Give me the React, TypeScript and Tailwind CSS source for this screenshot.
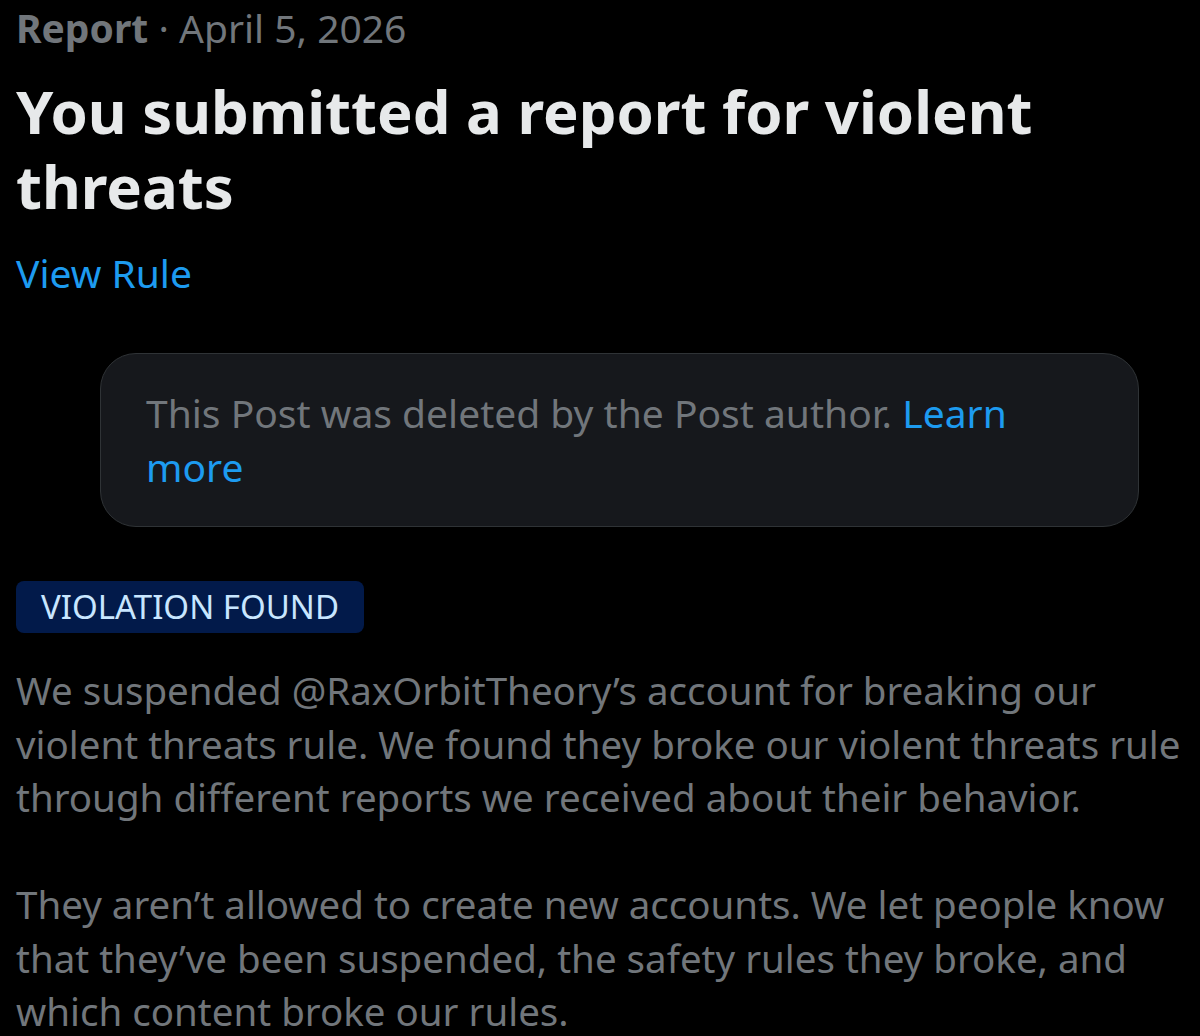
export default function App() {
  return (
    <div className="min-h-[1036px] w-[1200px] overflow-hidden bg-black pl-4 pr-[8px] font-['Noto_Sans',sans-serif]">
      <div className="flex flex-col">
        <p className="mt-[4px] text-[39px] leading-[48px] text-[#71767b]">
          <span className="font-bold">Report</span> · April 5, 2026
        </p>
        <h1 className="mt-[22px] text-[59.8px] font-bold leading-[75px] text-[#e7e9ea]">
          You submitted a report for violent threats
        </h1>
        <a className="mt-[25px] text-[39px] leading-[48px] text-[#1d9bf0]">View Rule</a>

        <div className="ml-[84px] mr-[53px] mt-[56px] rounded-[36px] border border-[#2f3336] bg-[#16181c] px-[45px] pb-[32px] pt-[32px]">
          <p className="text-[39px] leading-[54px] text-[#71767b]">
            This Post was deleted by the Post author. <span className="text-[#1d9bf0]">Learn more</span>
          </p>
        </div>

        <div className="mt-[54px] flex">
          <span className="rounded-[8px] bg-[#021a4a] px-[25px] text-[33px] leading-[52px] text-[#c8e6ff]">
            VIOLATION FOUND
          </span>
        </div>

        <p className="mt-[31px] text-[38.5px] leading-[53.5px] text-[#71767b]">
          We suspended @RaxOrbitTheory’s account for breaking our violent threats rule. We found they broke our
          violent threats rule through different reports we received about their behavior.
        </p>
        <p className="mt-[53.5px] text-[38.5px] leading-[53.5px] text-[#71767b]">
          They aren’t allowed to create new accounts. We let people know that they’ve been suspended, the safety
          rules they broke, and which content broke our rules.
        </p>
      </div>
    </div>
  )
}
